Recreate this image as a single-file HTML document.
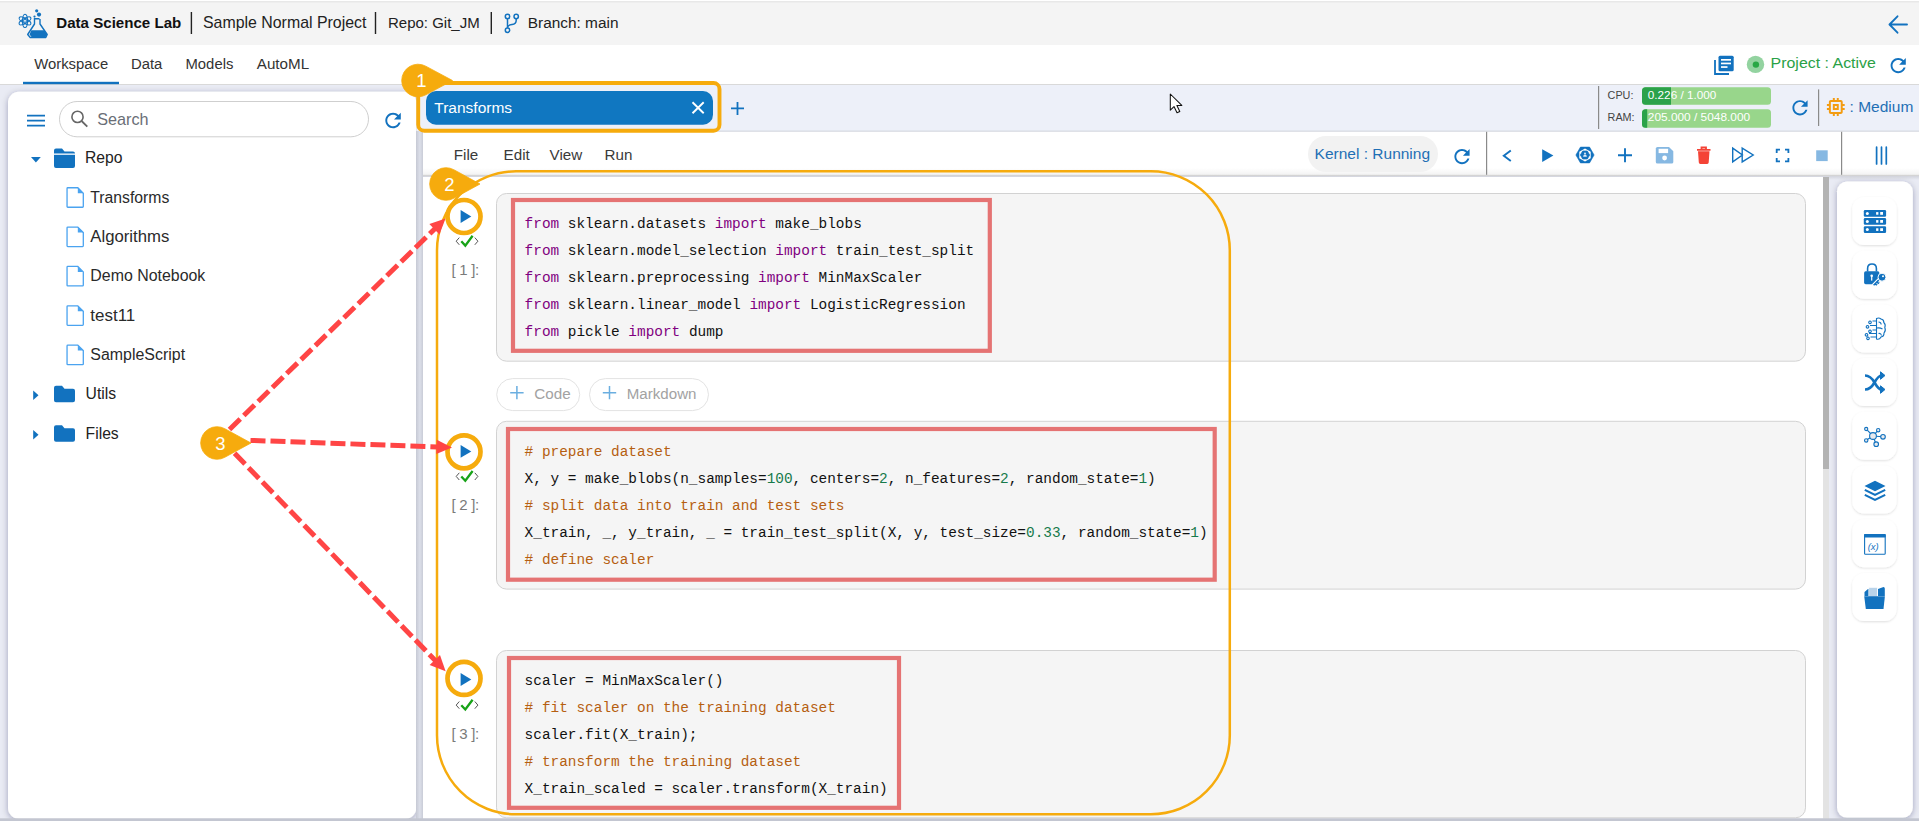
<!DOCTYPE html>
<html><head><meta charset="utf-8"><title>Data Science Lab</title>
<style>html,body{margin:0;padding:0;background:#e9ebf4;overflow:hidden;} svg{display:block;}</style></head>
<body><svg width="1919" height="821" viewBox="0 0 1919 821"><defs>
<linearGradient id="shL" x1="0" x2="1" y1="0" y2="0"><stop offset="0" stop-color="#eceef8"/><stop offset="0.5" stop-color="#dcdfe9"/><stop offset="1" stop-color="#c5c8d3"/></linearGradient>
<linearGradient id="shM" x1="0" x2="1" y1="0" y2="0"><stop offset="0" stop-color="#c6c9d4"/><stop offset="0.55" stop-color="#dcdfe9"/><stop offset="1" stop-color="#c9ccd7"/></linearGradient>
<linearGradient id="shT" x1="0" x2="0" y1="0" y2="1"><stop offset="0" stop-color="#000" stop-opacity="0.10"/><stop offset="1" stop-color="#000" stop-opacity="0"/></linearGradient>
<linearGradient id="shT0" x1="0" x2="0" y1="0" y2="1"><stop offset="0" stop-color="#000" stop-opacity="0"/><stop offset="1" stop-color="#000" stop-opacity="0.05"/></linearGradient>
<filter id="pansh" x="-10%" y="-5%" width="120%" height="110%"><feDropShadow dx="0" dy="1.5" stdDeviation="3" flood-color="#101840" flood-opacity="0.32"/></filter>
<filter id="cardsh" x="-30%" y="-30%" width="160%" height="160%"><feDropShadow dx="0" dy="1" stdDeviation="1.2" flood-color="#000" flood-opacity="0.13"/></filter>
</defs>
<rect x="0" y="0" width="1919" height="821" fill="#e9ebf4"/>
<rect x="0" y="0" width="1919" height="45" fill="#f4f4f4"/>
<rect x="0" y="0" width="1919" height="1" fill="#ffffff"/>
<rect x="0" y="1" width="1919" height="1.5" fill="#e8e8e8"/>
<rect x="0" y="45" width="1919" height="39.5" fill="#ffffff"/>
<rect x="0" y="84" width="1919" height="1" fill="#d9d9d9"/>
<g transform="translate(14,6)" fill="none" stroke="#1272bf">
 <ellipse cx="11" cy="14.9" rx="6.6" ry="2.5" stroke-width="1.1" transform="rotate(90 11 14.9)"/>
 <ellipse cx="11" cy="14.9" rx="6.6" ry="2.5" stroke-width="1.1" transform="rotate(30 11 14.9)"/>
 <ellipse cx="11" cy="14.9" rx="6.6" ry="2.5" stroke-width="1.1" transform="rotate(-30 11 14.9)"/>
 <circle cx="11" cy="14.9" r="1.5" fill="none" stroke-width="0.9"/>
 <path d="M19.8 12.8 H25.5 M20.5 13 V18 L13.7 28.5 L16.2 31.5 H31.8 L33.2 28.5 L26 18 V13" stroke-width="1.4" stroke-linejoin="round"/>
 <path d="M17.3 24.3 H30.6 L33 28.5 L31.5 31.2 H17.8 L15.5 28.5 Z" fill="#1272bf" stroke="none"/>
 <circle cx="22.7" cy="4.8" r="1.6" fill="#1272bf" stroke="none"/>
 <circle cx="25" cy="8.6" r="2.1" fill="#1272bf" stroke="none"/>
 <circle cx="20.5" cy="10.6" r="1.1" fill="#1272bf" stroke="none"/>
</g>
<text x="56.3" y="28.2" font-family="Liberation Sans" font-size="15.1" font-weight="bold" fill="#111" >Data Science Lab</text>
<rect x="190.7" y="12" width="1.4" height="22" fill="#222"/>
<text x="203" y="28.2" font-family="Liberation Sans" font-size="15.9" font-weight="normal" fill="#222" >Sample Normal Project</text>
<rect x="374.8" y="12" width="1.4" height="22" fill="#222"/>
<text x="388" y="28.2" font-family="Liberation Sans" font-size="15" font-weight="normal" fill="#222" >Repo: Git_JM</text>
<rect x="490.6" y="12" width="1.4" height="22" fill="#222"/>
<g fill="none" stroke="#1272bf" stroke-width="1.5">
 <circle cx="507.5" cy="16.5" r="2.2"/><circle cx="516.2" cy="16.5" r="2.2"/><circle cx="507.5" cy="30.3" r="2.2"/>
 <path d="M507.5 18.7 V28.1 M516.2 18.7 V20.5 Q516.2 24 512 24.6 Q507.8 25.2 507.6 27.5"/>
</g>
<text x="527.8" y="28.2" font-family="Liberation Sans" font-size="15.4" font-weight="normal" fill="#222" >Branch: main</text>
<path d="M1907 24.5 H1890.5 M1897.5 16.3 L1889.5 24.5 L1897.5 32.7" fill="none" stroke="#1272bf" stroke-width="1.9" stroke-linecap="round" stroke-linejoin="round"/>
<text x="34.2" y="69.3" font-family="Liberation Sans" font-size="14.85" font-weight="normal" fill="#333" >Workspace</text>
<text x="131" y="69.3" font-family="Liberation Sans" font-size="14.85" font-weight="normal" fill="#333" >Data</text>
<text x="185.5" y="69.3" font-family="Liberation Sans" font-size="14.85" font-weight="normal" fill="#333" >Models</text>
<text x="256.8" y="69.3" font-family="Liberation Sans" font-size="15.2" font-weight="normal" fill="#333" >AutoML</text>
<rect x="23" y="81.8" width="96" height="2.4" fill="#1272bf"/>
<g>
 <path d="M1715 60 V74 H1729" fill="none" stroke="#1272bf" stroke-width="1.8"/>
 <rect x="1718.5" y="55.8" width="15.2" height="15.5" rx="1.5" fill="#1272bf"/>
 <rect x="1721" y="59" width="10" height="1.7" fill="#fff"/>
 <rect x="1721" y="62.6" width="10" height="1.7" fill="#fff"/>
 <rect x="1721" y="66.2" width="6.5" height="1.7" fill="#fff"/>
</g>
<circle cx="1755.5" cy="64.4" r="8.7" fill="#93d3a0"/><circle cx="1755.9" cy="64.6" r="3.2" fill="#28a745"/>
<text x="1770.6" y="68.3" font-family="Liberation Sans" font-size="15.2" font-weight="normal" fill="#2aa146" textLength="105.3" lengthAdjust="spacingAndGlyphs">Project : Active</text>
<path d="M17.65 6.35C16.2 4.9 14.21 4 12 4c-4.42 0-7.99 3.58-7.99 8s3.57 8 7.99 8c3.73 0 6.84-2.55 7.73-6h-2.08c-.82 2.33-3.04 4-5.65 4-3.31 0-6-2.69-6-6s2.69-6 6-6c1.66 0 3.14.69 4.22 1.78L13 11h7V4l-2.35 2.35z" fill="#1272bf" transform="translate(1886.80,54.20) scale(0.9500)"/>
<rect x="8" y="91.7" width="408.3" height="727" rx="11" fill="#ffffff" filter="url(#pansh)"/>
<g stroke="#1272bf" stroke-width="1.7"><path d="M27 115.6 H45 M27 120.6 H45 M27 125.6 H45"/></g>
<rect x="59.5" y="101.5" width="309" height="35.3" rx="17.6" fill="#fff" stroke="#cfcfcf" stroke-width="1"/>
<circle cx="77.5" cy="116.9" r="5.6" fill="none" stroke="#666" stroke-width="1.6"/><path d="M81.6 121 L87.3 126.6" stroke="#666" stroke-width="1.8" stroke-linecap="butt"/>
<text x="97.2" y="125.2" font-family="Liberation Sans" font-size="16.2" font-weight="normal" fill="#6a6e76" >Search</text>
<path d="M17.65 6.35C16.2 4.9 14.21 4 12 4c-4.42 0-7.99 3.58-7.99 8s3.57 8 7.99 8c3.73 0 6.84-2.55 7.73-6h-2.08c-.82 2.33-3.04 4-5.65 4-3.31 0-6-2.69-6-6s2.69-6 6-6c1.66 0 3.14.69 4.22 1.78L13 11h7V4l-2.35 2.35z" fill="#1272bf" transform="translate(381.43,108.83) scale(0.9688)"/>
<path d="M31 157 H40.8 L35.9 162.5 Z" fill="#1272bf"/>
<path d="M54 150.5 Q54 148.5 56 148.5 H62 L64.5 151.5 H73 Q75 151.5 75 153.5 V166.0 Q75 168.0 73 168.0 H56 Q54 168.0 54 166.0 Z" fill="#1272bf"/>
<rect x="54" y="153.5" width="21" height="1.3" fill="#fff"/>
<text x="85" y="163.2" font-family="Liberation Sans" font-size="15.7" font-weight="normal" fill="#222" >Repo</text>
<path d="M67.05 188.5 Q67.05 187.75 67.8 187.75 H77.8 L83.3 193.2 V206.5 Q83.3 207.25 82.55 207.25 H67.8 Q67.05 207.25 67.05 206.5 Z" fill="#fff" stroke="#4aa3f0" stroke-width="1.3"/>
<path d="M77.8 187.75 V193.2 H83.3 Z" fill="#4aa3f0"/>
<text x="90.3" y="202.6" font-family="Liberation Sans" font-size="15.6" font-weight="normal" fill="#2a2a2a" textLength="79" lengthAdjust="spacingAndGlyphs">Transforms</text>
<path d="M67.05 227.85 Q67.05 227.1 67.8 227.1 H77.8 L83.3 232.54999999999998 V245.85 Q83.3 246.6 82.55 246.6 H67.8 Q67.05 246.6 67.05 245.85 Z" fill="#fff" stroke="#4aa3f0" stroke-width="1.3"/>
<path d="M77.8 227.1 V232.54999999999998 H83.3 Z" fill="#4aa3f0"/>
<text x="90.3" y="241.95" font-family="Liberation Sans" font-size="15.6" font-weight="normal" fill="#2a2a2a" textLength="79" lengthAdjust="spacingAndGlyphs">Algorithms</text>
<path d="M67.05 267.2 Q67.05 266.45 67.8 266.45 H77.8 L83.3 271.9 V285.2 Q83.3 285.95 82.55 285.95 H67.8 Q67.05 285.95 67.05 285.2 Z" fill="#fff" stroke="#4aa3f0" stroke-width="1.3"/>
<path d="M77.8 266.45 V271.9 H83.3 Z" fill="#4aa3f0"/>
<text x="90.3" y="281.3" font-family="Liberation Sans" font-size="15.6" font-weight="normal" fill="#2a2a2a" textLength="115" lengthAdjust="spacingAndGlyphs">Demo Notebook</text>
<path d="M67.05 306.55 Q67.05 305.8 67.8 305.8 H77.8 L83.3 311.25 V324.55 Q83.3 325.3 82.55 325.3 H67.8 Q67.05 325.3 67.05 324.55 Z" fill="#fff" stroke="#4aa3f0" stroke-width="1.3"/>
<path d="M77.8 305.8 V311.25 H83.3 Z" fill="#4aa3f0"/>
<text x="90.3" y="320.65000000000003" font-family="Liberation Sans" font-size="15.6" font-weight="normal" fill="#2a2a2a" textLength="45" lengthAdjust="spacingAndGlyphs">test11</text>
<path d="M67.05 345.9 Q67.05 345.15 67.8 345.15 H77.8 L83.3 350.59999999999997 V363.9 Q83.3 364.65 82.55 364.65 H67.8 Q67.05 364.65 67.05 363.9 Z" fill="#fff" stroke="#4aa3f0" stroke-width="1.3"/>
<path d="M77.8 345.15 V350.59999999999997 H83.3 Z" fill="#4aa3f0"/>
<text x="90.3" y="360.0" font-family="Liberation Sans" font-size="15.6" font-weight="normal" fill="#2a2a2a" textLength="94.8" lengthAdjust="spacingAndGlyphs">SampleScript</text>
<path d="M33.2 390.6 L38.5 395.3 L33.2 400.0 Z" fill="#1272bf"/>
<path d="M54 387.8 Q54 385.8 56 385.8 H62 L64.5 388.8 H73 Q75 388.8 75 390.8 V400.3 Q75 402.3 73 402.3 H56 Q54 402.3 54 400.3 Z" fill="#1272bf"/>
<text x="85.6" y="399.2" font-family="Liberation Sans" font-size="15.7" font-weight="normal" fill="#222" >Utils</text>
<path d="M33.2 430.0 L38.5 434.7 L33.2 439.4 Z" fill="#1272bf"/>
<path d="M54 427.2 Q54 425.2 56 425.2 H62 L64.5 428.2 H73 Q75 428.2 75 430.2 V439.7 Q75 441.7 73 441.7 H56 Q54 441.7 54 439.7 Z" fill="#1272bf"/>
<text x="85.6" y="438.59999999999997" font-family="Liberation Sans" font-size="15.7" font-weight="normal" fill="#222" >Files</text>
<rect x="416" y="131" width="7" height="690" fill="url(#shM)"/>
<rect x="417" y="85" width="1502" height="46" fill="#edf0f9"/>
<rect x="423" y="130.6" width="1496" height="1.2" fill="#d3d6de"/>
<rect x="426" y="91" width="287" height="33.8" rx="10" fill="#1077c1"/>
<text x="434.3" y="113.4" font-family="Liberation Sans" font-size="15.5" font-weight="normal" fill="#fff" >Transforms</text>
<path d="M692.5 102.3 L703.7 113.2 M703.7 102.3 L692.5 113.2" stroke="#fff" stroke-width="1.9"/>
<path d="M731 108.4 H744 M737.5 101.9 V115" stroke="#1272bf" stroke-width="1.8"/>
<rect x="1598" y="86" width="1.2" height="43" fill="#8a8a8a"/>
<text x="1607.6" y="99" font-family="Liberation Sans" font-size="10.8" font-weight="normal" fill="#444" >CPU:</text>
<text x="1607.6" y="121.2" font-family="Liberation Sans" font-size="10.8" font-weight="normal" fill="#444" >RAM:</text>
<rect x="1642" y="87.2" width="129" height="17.6" rx="3.5" fill="#98d68b"/>
<path d="M1645.5 87.2 H1671 V104.8 H1645.5 Q1642 104.8 1642 101.3 V90.7 Q1642 87.2 1645.5 87.2 Z" fill="#2ba24a"/>
<rect x="1642" y="109.2" width="129" height="18.5" rx="3.5" fill="#98d68b"/>
<path d="M1645.5 109.2 H1647.2 V127.7 H1645.5 Q1642 127.7 1642 124.2 V112.7 Q1642 109.2 1645.5 109.2 Z" fill="#2ba24a"/>
<text x="1647.8" y="99.3" font-family="Liberation Sans" font-size="11.6" font-weight="normal" fill="#fff" textLength="68.5" lengthAdjust="spacingAndGlyphs">0.226 / 1.000</text>
<text x="1647.8" y="121.4" font-family="Liberation Sans" font-size="11.6" font-weight="normal" fill="#fff" textLength="102.3" lengthAdjust="spacingAndGlyphs">205.000 / 5048.000</text>
<path d="M17.65 6.35C16.2 4.9 14.21 4 12 4c-4.42 0-7.99 3.58-7.99 8s3.57 8 7.99 8c3.73 0 6.84-2.55 7.73-6h-2.08c-.82 2.33-3.04 4-5.65 4-3.31 0-6-2.69-6-6s2.69-6 6-6c1.66 0 3.14.69 4.22 1.78L13 11h7V4l-2.35 2.35z" fill="#1272bf" transform="translate(1788.60,96.40) scale(0.9500)"/>
<rect x="1818" y="89.4" width="1.2" height="36.6" fill="#8a8a8a"/>
<path d="M15 9H9v6h6V9zm-2 4h-2v-2h2v2zm8-2V9h-2V7c0-1.1-.9-2-2-2h-2V3h-2v2h-2V3H9v2H7c-1.1 0-2 .9-2 2v2H3v2h2v2H3v2h2v2c0 1.1.9 2 2 2h2v2h2v-2h2v2h2v-2h2c1.1 0 2-.9 2-2v-2h2v-2h-2v-2h2zm-4 6H7V7h10v10z" fill="#f39c12" transform="translate(1823.93,95.13) scale(0.9889)"/>
<text x="1849.6" y="112.3" font-family="Liberation Sans" font-size="15.5" font-weight="normal" fill="#1f6fb5" >: Medium</text>
<path d="M1170.3 94 L1170.3 110.2 L1174 106.6 L1177 112.7 L1179.8 111.4 L1176.9 105.4 L1181.8 105.4 Z" fill="#fff" stroke="#111" stroke-width="1.05" stroke-linejoin="round"/>
<rect x="423" y="131.8" width="1496" height="43.4" fill="#ffffff"/>
<rect x="423" y="168" width="1496" height="7" fill="url(#shT0)"/>
<rect x="423" y="174.8" width="1496" height="1.2" fill="#d4d4d4"/>
<rect x="423" y="176" width="1496" height="4" fill="url(#shT)"/>
<text x="453.8" y="160" font-family="Liberation Sans" font-size="15.2" font-weight="normal" fill="#3a3a3a" >File</text>
<text x="503.6" y="160" font-family="Liberation Sans" font-size="15.2" font-weight="normal" fill="#3a3a3a" >Edit</text>
<text x="549.6" y="160" font-family="Liberation Sans" font-size="15.2" font-weight="normal" fill="#3a3a3a" >View</text>
<text x="604.6" y="160" font-family="Liberation Sans" font-size="15.2" font-weight="normal" fill="#3a3a3a" >Run</text>
<rect x="1308" y="136" width="130" height="36" rx="18" fill="#f2f2f2"/>
<text x="1314.6" y="159.4" font-family="Liberation Sans" font-size="15.5" font-weight="normal" fill="#1f6fb5" >Kernel : Running</text>
<path d="M17.65 6.35C16.2 4.9 14.21 4 12 4c-4.42 0-7.99 3.58-7.99 8s3.57 8 7.99 8c3.73 0 6.84-2.55 7.73-6h-2.08c-.82 2.33-3.04 4-5.65 4-3.31 0-6-2.69-6-6s2.69-6 6-6c1.66 0 3.14.69 4.22 1.78L13 11h7V4l-2.35 2.35z" fill="#1272bf" transform="translate(1450.60,145.20) scale(0.9500)"/>
<rect x="1486" y="131.8" width="1.2" height="43" fill="#8a8a8a"/>
<path d="M1510.8 150.6 L1503.8 155.8 L1510.8 161" fill="none" stroke="#1272bf" stroke-width="1.9"/>
<path d="M1542.2 149.2 L1553.4 155.6 L1542.2 162 Z" fill="#1272bf"/>
<path d="M1594.10 155.00 L1589.55 162.88 L1580.45 162.88 L1575.90 155.00 L1580.45 147.12 L1589.55 147.12 Z" fill="#1272bf" stroke="#1272bf" stroke-width="0.6" stroke-linejoin="round"/>
<path d="M1591.60 155.00 L1588.30 160.72 L1581.70 160.72 L1578.40 155.00 L1581.70 149.28 L1588.30 149.28 Z" fill="#fff" transform="rotate(30 1585 155)"/>
<path d="M1589.60 155.00 L1587.30 158.98 L1582.70 158.98 L1580.40 155.00 L1582.70 151.02 L1587.30 151.02 Z" fill="#1272bf" stroke="#1272bf" stroke-width="0.8" stroke-linejoin="round"/>
<circle cx="1585" cy="153.6" r="1" fill="#dfeaf5"/><path d="M1583.1 156.8 Q1583.3 154.6 1585 154.6 Q1586.7 154.6 1586.9 156.8 Z" fill="#dfeaf5"/>
<path d="M1618 155.3 H1632 M1625 148.3 V162.3" stroke="#1272bf" stroke-width="1.9"/>
<path d="M1657.5 147 H1669 L1673.3 151.3 V162 Q1673.3 163.6 1671.7 163.6 H1657.5 Q1655.8 163.6 1655.8 162 V148.6 Q1655.8 147 1657.5 147 Z" fill="#86b8e2"/><rect x="1658.6" y="148.8" width="9.5" height="4.3" fill="#fff"/><circle cx="1664.6" cy="158" r="2.4" fill="#fff"/>
<path d="M1697 149.8 H1710.5 M1701.5 149.5 V147.5 H1706 V149.5" stroke="#f44336" stroke-width="1.8" fill="none"/><path d="M1698 151.3 H1709.5 L1708.7 162.5 Q1708.6 163.9 1707.2 163.9 H1700.3 Q1698.9 163.9 1698.8 162.5 Z" fill="#f44336"/>
<path d="M1732.7 148.1 L1742.4 155 L1732.7 161.9 Z M1742.2 148.1 L1753.2 155 L1742.2 161.9 Z" fill="none" stroke="#1272bf" stroke-width="1.4" stroke-linejoin="miter"/>
<path d="M1776.7 153 V149.7 H1780 M1785 149.7 H1788.4 V153 M1788.4 158 V161.3 H1785 M1780 161.3 H1776.7 V158" fill="none" stroke="#1272bf" stroke-width="1.8"/>
<rect x="1816.2" y="150.3" width="11.5" height="10.8" fill="#86b8e2"/>
<rect x="1841" y="131.8" width="1.2" height="43" fill="#8a8a8a"/>
<path d="M1876.6 147.2 V164 M1881.5 147.2 V164 M1886.3 147.2 V164" stroke="#1272bf" stroke-width="1.7" stroke-linecap="round"/>
<rect x="423" y="177" width="1406" height="641.5" fill="#ffffff"/>
<rect x="1823" y="177" width="6" height="292" fill="#b3b3b3"/>
<rect x="1823" y="469" width="6" height="350" fill="#e3e3e3"/>
<rect x="1837" y="181.6" width="75.8" height="636" rx="10" fill="#ffffff" filter="url(#pansh)"/>
<rect x="1852.3" y="197.0" width="44.3" height="48" rx="12" fill="#ffffff" filter="url(#cardsh)"/>
<rect x="1852.3" y="250.7" width="44.3" height="48" rx="12" fill="#ffffff" filter="url(#cardsh)"/>
<rect x="1852.3" y="304.4" width="44.3" height="48" rx="12" fill="#ffffff" filter="url(#cardsh)"/>
<rect x="1852.3" y="358.1" width="44.3" height="48" rx="12" fill="#ffffff" filter="url(#cardsh)"/>
<rect x="1852.3" y="411.8" width="44.3" height="48" rx="12" fill="#ffffff" filter="url(#cardsh)"/>
<rect x="1852.3" y="465.5" width="44.3" height="48" rx="12" fill="#ffffff" filter="url(#cardsh)"/>
<rect x="1852.3" y="519.2" width="44.3" height="48" rx="12" fill="#ffffff" filter="url(#cardsh)"/>
<rect x="1852.3" y="572.9" width="44.3" height="48" rx="12" fill="#ffffff" filter="url(#cardsh)"/>
<rect x="1863.8" y="210" width="22.3" height="6.7" rx="1.2" fill="#1272bf"/>
<circle cx="1867.3" cy="213.4" r="1.5" fill="#fff"/>
<rect x="1876.1" y="212.1" width="2.3" height="2.6" fill="#fff"/><rect x="1880.2" y="212" width="2.8" height="2.8" fill="#fff"/>
<rect x="1863.8" y="218" width="22.3" height="6.7" rx="1.2" fill="#1272bf"/>
<circle cx="1867.3" cy="221.4" r="1.5" fill="#fff"/>
<rect x="1876.1" y="220.1" width="2.3" height="2.6" fill="#fff"/><rect x="1880.2" y="220" width="2.8" height="2.8" fill="#fff"/>
<rect x="1863.8" y="226.2" width="22.3" height="6.7" rx="1.2" fill="#1272bf"/>
<circle cx="1867.3" cy="229.6" r="1.5" fill="#fff"/>
<rect x="1876.1" y="228.29999999999998" width="2.3" height="2.6" fill="#fff"/><rect x="1880.2" y="228.2" width="2.8" height="2.8" fill="#fff"/>
<path d="M1867.6 271.5 V268.5 Q1867.6 264 1872 264 Q1876.4 264 1876.4 268.5 V271.5" fill="none" stroke="#1272bf" stroke-width="1.6"/>
<rect x="1864.1" y="271.3" width="15.3" height="12.9" rx="1.6" fill="#1272bf"/>
<circle cx="1871.7" cy="275.8" r="1.3" fill="#fff"/><rect x="1871.1" y="276" width="1.2" height="4.6" fill="#fff"/>
<path d="M1873.2 285.5 L1880 278.7" stroke="#fff" stroke-width="3.6"/><path d="M1873.6 285.2 L1880.2 278.6 M1875.2 283.6 L1876.8 285.2 M1877 281.8 L1878.4 283.2" stroke="#1272bf" stroke-width="1.6"/>
<circle cx="1882" cy="277.2" r="4" fill="#1272bf" stroke="#fff" stroke-width="1"/><circle cx="1883" cy="276.2" r="1" fill="#fff"/>
<g fill="none" stroke="#1272bf" stroke-width="1.1"><path d="M1876.5 318.5 Q1879 317.3 1881 319 Q1884 319.5 1883.8 322.5 Q1886 324.5 1884.8 327.5 Q1886.2 330.5 1884 333 Q1884.2 336.5 1881 337 Q1879.5 340 1876.5 339 Z"/><path d="M1878.5 322 Q1881 322 1881.2 324.5 M1877 328 Q1880 327.5 1882.5 329 M1878.5 333.5 Q1881 333 1881.5 335.5"/><path d="M1876.5 321 H1872.5 M1870 321 a1.3 1.3 0 1 0 0.01 0 M1876.5 325.5 H1870 M1867.5 325.5 a1.3 1.3 0 1 0 0.01 0 M1876.5 330 H1872.5 M1870 330 a1.3 1.3 0 1 0 0.01 0 M1876.5 333.5 H1869 M1866.5 333.5 a1.3 1.3 0 1 0 0.01 0 M1876.5 337 H1870.5 M1868 337 a1.3 1.3 0 1 0 0.01 0"/></g>
<path d="M1865 375.5 Q1870.5 375.5 1874.5 382.5 Q1878.5 389.5 1881.5 389.5 M1865 389.5 Q1870.5 389.5 1874.5 382.5 Q1878.5 375.5 1881.5 375.5" fill="none" stroke="#1272bf" stroke-width="2.6"/>
<path d="M1880.5 371.8 L1885 375.5 L1880.5 379.3 Z M1880.5 385.8 L1885 389.5 L1880.5 393.3 Z" fill="#1272bf" stroke="#1272bf" stroke-width="1" stroke-linejoin="round"/>
<g stroke="#1272bf" stroke-width="1.1" fill="#e8eaee"><path d="M1873 436 L1866.3 429.2 M1873 436 L1878 430.4 M1873 436 L1882.5 436.7 M1873 436 L1866.2 440.3 M1873 436 L1876 444" fill="none"/><circle cx="1873" cy="436" r="3.4"/><circle cx="1866.2" cy="429" r="1.6"/><circle cx="1878.2" cy="430.2" r="1.7"/><circle cx="1883" cy="436.8" r="2.3"/><circle cx="1866.2" cy="440.4" r="1.7"/><circle cx="1876.2" cy="444.2" r="2.3"/></g>
<path d="M1875 480.7 L1885.5 486 L1875 491.2 L1864.5 486 Z" fill="#1272bf"/>
<path d="M1864.8 489.8 L1875 495 L1885.2 489.8 M1864.8 494.8 L1875 500 L1885.2 494.8" fill="none" stroke="#1272bf" stroke-width="2"/>
<rect x="1864.6" y="534.5" width="20.6" height="19.8" rx="0.8" fill="none" stroke="#1272bf" stroke-width="1.1"/>
<rect x="1864.1" y="534" width="21.6" height="3.6" rx="0.8" fill="#1272bf"/>
<text x="1867.7" y="549.6" font-family="Liberation Sans" font-style="italic" font-size="9.5" fill="#1272bf">(x)</text>
<path d="M1864.5 592 L1868 589 H1871 V596 H1864.5 Z M1878 589 L1883.5 587 Q1884.8 587 1884.8 588.5 V596 H1878 Z" fill="#1272bf"/>
<rect x="1868.8" y="587.5" width="8.5" height="9.5" fill="#b9d3ea" stroke="#fff" stroke-width="0.6"/>
<path d="M1864.2 596.2 H1884.9 L1883.5 609 H1865.8 Z" fill="#1272bf"/>
<rect x="496.5" y="193.5" width="1309" height="167.7" rx="10" fill="#f5f5f5" stroke="#d2d2d2" stroke-width="1"/>
<rect x="496.5" y="421.3" width="1309" height="167.8" rx="10" fill="#f5f5f5" stroke="#d2d2d2" stroke-width="1"/>
<rect x="496.5" y="650.5" width="1309" height="167.3" rx="10" fill="#f5f5f5" stroke="#d2d2d2" stroke-width="1"/>
<circle cx="464" cy="216.5" r="16.5" fill="#fff" stroke="#f6ab0d" stroke-width="4.7"/>
<path d="M460.6 210.1 L471.3 216.5 L460.6 222.9 Z" fill="#1272bf"/>
<path d="M459.3 237.6 L456.2 241.2 L459.3 244.8 M474.8 237.6 L477.9 241.2 L474.8 244.8" fill="none" stroke="#555" stroke-width="1"/>
<path d="M461.3 241.3 L465.3 245.6 L472.6 235.8" fill="none" stroke="#18a318" stroke-width="2.3"/>
<text x="451.6" y="274.6" font-family="Liberation Sans" font-size="15" fill="#7a7a7a" textLength="27.6" lengthAdjust="spacing" xml:space="preserve">[ 1 ]:</text>
<circle cx="464" cy="451.8" r="16.5" fill="#fff" stroke="#f6ab0d" stroke-width="4.7"/>
<path d="M460.6 445.0 L471.3 451.4 L460.6 457.79999999999995 Z" fill="#1272bf"/>
<path d="M459.3 472.8 L456.2 476.4 L459.3 480.0 M474.8 472.8 L477.9 476.4 L474.8 480.0" fill="none" stroke="#555" stroke-width="1"/>
<path d="M461.3 476.5 L465.3 480.8 L472.6 471.0" fill="none" stroke="#18a318" stroke-width="2.3"/>
<text x="451.6" y="509.8" font-family="Liberation Sans" font-size="15" fill="#7a7a7a" textLength="27.6" lengthAdjust="spacing" xml:space="preserve">[ 2 ]:</text>
<circle cx="464" cy="678.4" r="16.5" fill="#fff" stroke="#f6ab0d" stroke-width="4.7"/>
<path d="M460.6 673.1 L471.3 679.5 L460.6 685.9 Z" fill="#1272bf"/>
<path d="M459.3 701.5 L456.2 705.1 L459.3 708.6999999999999 M474.8 701.5 L477.9 705.1 L474.8 708.6999999999999" fill="none" stroke="#555" stroke-width="1"/>
<path d="M461.3 705.1999999999999 L465.3 709.5 L472.6 699.6999999999999" fill="none" stroke="#18a318" stroke-width="2.3"/>
<text x="451.6" y="739" font-family="Liberation Sans" font-size="15" fill="#7a7a7a" textLength="27.6" lengthAdjust="spacing" xml:space="preserve">[ 3 ]:</text>
<rect x="496.7" y="378.6" width="83" height="32" rx="16" fill="#fff" stroke="#e3e3e3" stroke-width="1"/>
<rect x="589.5" y="378.6" width="119" height="32" rx="16" fill="#fff" stroke="#e3e3e3" stroke-width="1"/>
<path d="M510.2 392.7 H523.6 M516.9 386 V399.3 M602.8 392.7 H616.2 M609.5 386 V399.3" stroke="#6aaee0" stroke-width="1.5"/>
<text x="534.3" y="399.4" font-family="Liberation Sans" font-size="15.2" font-weight="normal" fill="#a2a2a2" >Code</text>
<text x="626.8" y="399.4" font-family="Liberation Sans" font-size="15.1" font-weight="normal" fill="#a2a2a2" >Markdown</text>
<text x="524.6" y="227.5" font-family="Liberation Mono" font-size="14.42" xml:space="preserve"><tspan fill="#800080">from</tspan><tspan fill="#111"> sklearn.datasets </tspan><tspan fill="#800080">import</tspan><tspan fill="#111"> make_blobs</tspan></text>
<text x="524.6" y="254.6" font-family="Liberation Mono" font-size="14.42" xml:space="preserve"><tspan fill="#800080">from</tspan><tspan fill="#111"> sklearn.model_selection </tspan><tspan fill="#800080">import</tspan><tspan fill="#111"> train_test_split</tspan></text>
<text x="524.6" y="281.7" font-family="Liberation Mono" font-size="14.42" xml:space="preserve"><tspan fill="#800080">from</tspan><tspan fill="#111"> sklearn.preprocessing </tspan><tspan fill="#800080">import</tspan><tspan fill="#111"> MinMaxScaler</tspan></text>
<text x="524.6" y="308.8" font-family="Liberation Mono" font-size="14.42" xml:space="preserve"><tspan fill="#800080">from</tspan><tspan fill="#111"> sklearn.linear_model </tspan><tspan fill="#800080">import</tspan><tspan fill="#111"> LogisticRegression</tspan></text>
<text x="524.6" y="335.9" font-family="Liberation Mono" font-size="14.42" xml:space="preserve"><tspan fill="#800080">from</tspan><tspan fill="#111"> pickle </tspan><tspan fill="#800080">import</tspan><tspan fill="#111"> dump</tspan></text>
<text x="524.6" y="456.0" font-family="Liberation Mono" font-size="14.42" xml:space="preserve"><tspan fill="#b65f11"># prepare dataset</tspan></text>
<text x="524.6" y="483.1" font-family="Liberation Mono" font-size="14.42" xml:space="preserve"><tspan fill="#111">X, y = make_blobs(n_samples=</tspan><tspan fill="#177a4b">100</tspan><tspan fill="#111">, centers=</tspan><tspan fill="#177a4b">2</tspan><tspan fill="#111">, n_features=</tspan><tspan fill="#177a4b">2</tspan><tspan fill="#111">, random_state=</tspan><tspan fill="#177a4b">1</tspan><tspan fill="#111">)</tspan></text>
<text x="524.6" y="510.2" font-family="Liberation Mono" font-size="14.42" xml:space="preserve"><tspan fill="#b65f11"># split data into train and test sets</tspan></text>
<text x="524.6" y="537.3" font-family="Liberation Mono" font-size="14.42" xml:space="preserve"><tspan fill="#111">X_train, _, y_train, _ = train_test_split(X, y, test_size=</tspan><tspan fill="#177a4b">0.33</tspan><tspan fill="#111">, random_state=</tspan><tspan fill="#177a4b">1</tspan><tspan fill="#111">)</tspan></text>
<text x="524.6" y="564.4" font-family="Liberation Mono" font-size="14.42" xml:space="preserve"><tspan fill="#b65f11"># define scaler</tspan></text>
<text x="524.6" y="685.0" font-family="Liberation Mono" font-size="14.42" xml:space="preserve"><tspan fill="#111">scaler = MinMaxScaler()</tspan></text>
<text x="524.6" y="712.1" font-family="Liberation Mono" font-size="14.42" xml:space="preserve"><tspan fill="#b65f11"># fit scaler on the training dataset</tspan></text>
<text x="524.6" y="739.2" font-family="Liberation Mono" font-size="14.42" xml:space="preserve"><tspan fill="#111">scaler.fit(X_train);</tspan></text>
<text x="524.6" y="766.3" font-family="Liberation Mono" font-size="14.42" xml:space="preserve"><tspan fill="#b65f11"># transform the training dataset</tspan></text>
<text x="524.6" y="793.4" font-family="Liberation Mono" font-size="14.42" xml:space="preserve"><tspan fill="#111">X_train_scaled = scaler.transform(X_train)</tspan></text>
<rect x="513" y="200" width="476.8" height="150.8" fill="none" stroke="#e57373" stroke-width="4.2"/>
<rect x="508" y="429" width="706.7" height="150.7" fill="none" stroke="#e57373" stroke-width="4.2"/>
<rect x="509" y="658" width="390" height="149.8" fill="none" stroke="#e57373" stroke-width="4.2"/>
<rect x="0" y="818.3" width="1919" height="2.7" fill="#c3c6d1"/>
<rect x="418.2" y="83" width="301.3" height="47.7" rx="6" fill="none" stroke="#f6ab0d" stroke-width="3.9"/>
<rect x="437" y="171.3" width="792.8" height="643" rx="79" fill="none" stroke="#f6ab0d" stroke-width="2.5"/>
<path d="M229.5 429.5 L435.13 228.53" stroke="#ff4545" stroke-width="5" stroke-dasharray="15 5" fill="none"/>
<path d="M445.5 218.4 L439.45 234.38 L429.38 224.08 Z" fill="#ff4545"/>
<path d="M250.5 440.4 L437.51 446.90" stroke="#ff4545" stroke-width="5" stroke-dasharray="15 5" fill="none"/>
<path d="M452 447.4 L436.26 454.06 L436.76 439.67 Z" fill="#ff4545"/>
<path d="M234.6 453.3 L435.51 660.78" stroke="#ff4545" stroke-width="5" stroke-dasharray="15 5" fill="none"/>
<path d="M445.6 671.2 L429.65 665.07 L439.99 655.06 Z" fill="#ff4545"/>
<path d="M452.5 80.5 L425.70 66.13 A16.3 16.3 0 1 0 425.70 94.87 Z" fill="#f6ab0d" stroke="#f6ab0d" stroke-width="0.8" stroke-linejoin="round"/>
<text x="416.3" y="87.1" font-family="Liberation Sans" font-size="18.5" font-weight="normal" fill="#fff" >1</text>
<path d="M480 184 L453.81 169.70 A16.3 16.3 0 1 0 453.81 198.30 Z" fill="#f6ab0d" stroke="#f6ab0d" stroke-width="0.8" stroke-linejoin="round"/>
<text x="444.3" y="190.6" font-family="Liberation Sans" font-size="18.5" font-weight="normal" fill="#fff" >2</text>
<path d="M251 443 L224.81 428.70 A16.3 16.3 0 1 0 224.81 457.30 Z" fill="#f6ab0d" stroke="#f6ab0d" stroke-width="0.8" stroke-linejoin="round"/>
<text x="215.3" y="449.6" font-family="Liberation Sans" font-size="18.5" font-weight="normal" fill="#fff" >3</text>
</svg></body></html>
